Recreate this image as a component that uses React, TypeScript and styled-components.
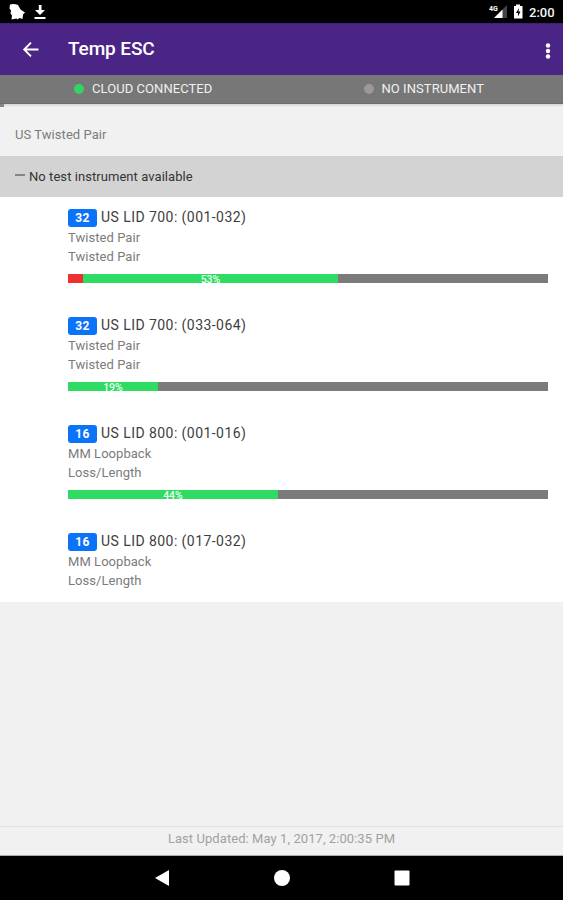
import React from 'react';
import styled, { createGlobalStyle } from 'styled-components';

const GlobalStyle = createGlobalStyle`
  *, *::before, *::after { box-sizing: border-box; }
  body { margin: 0; background: #f1f1f1; font-family: Roboto, "Liberation Sans", sans-serif; }
`;

const Screen = styled.div`
  display: flex;
  flex-direction: column;
  height: 900px;
  overflow: hidden;
  background: #f1f1f1;
  white-space: nowrap;
`;

const StatusBar = styled.header`
  display: flex;
  flex: none;
  justify-content: space-between;
  height: 23px;
  background: #000;
`;

const StatusGroup = styled.div`
  display: flex;
`;

const Clock = styled.span`
  width: 34px;
  padding-top: 1px;
  color: #f4f4f4;
  font-size: 13px;
  font-weight: 500;
  line-height: 23px;
`;

const Toolbar = styled.div`
  display: flex;
  flex: none;
  align-items: center;
  height: 52px;
  padding: 0 8px 0 20px;
  background: #4b2585;
  border-top: 1px solid #40206f;
`;

const Title = styled.h1`
  flex: 1;
  margin: 0 0 1px 27px;
  color: #fff;
  font-size: 19px;
  font-weight: 500;
  letter-spacing: -0.1px;
  line-height: 24px;
`;

const ConnectionBar = styled.div`
  display: grid;
  flex: none;
  grid-template-columns: 1fr 1fr;
  height: 29px;
  background: #777;
  border-bottom: 1px solid #6d6d6d;
`;

const Connection = styled.div<{ $inset: number }>`
  display: flex;
  align-items: center;
  gap: 8px;
  height: 27px;
  padding-left: ${p => p.$inset}px;
  color: #f0f0f0;
  font-size: 13px;
  letter-spacing: 0.06px;
`;

const Dot = styled.i<{ $color: string }>`
  width: 10px;
  height: 10px;
  border-radius: 50%;
  background: ${p => p.$color};
`;

const LoadTrack = styled.div`
  flex: none;
  height: 3px;
  background: linear-gradient(#d2d2d2, #f1f1f1);
  &::before { content: ""; display: block; width: 4px; height: 3px; background: #858585; }
`;

const SectionLabel = styled.div`
  flex: none;
  height: 49px;
  padding: 16px 15px 0;
  color: #7c7c7c;
  font-size: 13px;
  letter-spacing: 0.06px;
  line-height: 24px;
`;

const Notice = styled.div`
  display: flex;
  flex: none;
  align-items: center;
  gap: 4px;
  height: 41px;
  padding: 0 15px 1px;
  background: #d3d3d3;
  color: #343434;
  font-size: 13px;
  letter-spacing: 0.06px;
`;

const Dash = styled.i`
  width: 10px;
  height: 2px;
  margin-top: -3px;
  background: #858585;
`;

const List = styled.main`
  flex: none;
  height: 405px;
  background: #fff;
`;

const Item = styled.section`
  height: 107.9px;
  padding: 9px 15px 0 68px;
`;

const ItemHeading = styled.div`
  display: flex;
  align-items: center;
  gap: 4px;
  height: 22px;
  color: #3e3e3e;
  font-size: 14px;
  letter-spacing: 0.44px;
`;

const Badge = styled.span`
  width: 29px;
  height: 18px;
  margin-top: 2px;
  border-radius: 3px;
  background: #0b73f8;
  color: #fff;
  font-size: 12px;
  font-weight: 700;
  letter-spacing: 0.4px;
  line-height: 18px;
  text-align: center;
`;

const Detail = styled.div`
  height: 19px;
  color: #7b7b7b;
  font-size: 13px;
  letter-spacing: 0.05px;
  line-height: 20px;
`;

const Progress = styled.div`
  display: flex;
  height: 9px;
  margin-top: 8px;
  background: #7b7b7b;
`;

const Segment = styled.div<{ $color: string }>`
  height: 9px;
  background: ${p => p.$color};
  color: #f0fff5;
  font-size: 10.5px;
  font-weight: 500;
  line-height: 11px;
  text-align: center;
`;

const Footer = styled.footer`
  flex: none;
  height: 30px;
  margin-top: auto;
  border-top: 1px solid #e2e2e2;
  border-bottom: 1px solid #aaa;
  color: #a1a1a1;
  font-size: 13px;
  letter-spacing: 0.07px;
  line-height: 24px;
  text-align: center;
`;

const NavBar = styled.nav`
  display: flex;
  flex: none;
  align-items: center;
  justify-content: center;
  gap: 104px;
  height: 44px;
  background: #000;
`;

interface Entry {
  count: number;
  name: string;
  kind: string;
  test: string;
  failed?: number;
  passed?: number;
  label?: string;
}

const entries: Entry[] = [
  { count: 32, name: 'US LID 700: (001-032)', kind: 'Twisted Pair', test: 'Twisted Pair', failed: 15, passed: 255, label: '53%' },
  { count: 32, name: 'US LID 700: (033-064)', kind: 'Twisted Pair', test: 'Twisted Pair', passed: 90, label: '19%' },
  { count: 16, name: 'US LID 800: (001-016)', kind: 'MM Loopback', test: 'Loss/Length', passed: 210, label: '44%' },
  { count: 16, name: 'US LID 800: (017-032)', kind: 'MM Loopback', test: 'Loss/Length' },
];

const StatusIcons = () => (
  <svg width="60" height="23" fill="#fff">
    <path d="M10 4.500q4-1 8 .5l2.500 4.500L25 12.500l-2 2-.5 4.500-3-1-2 1.500-1-1-5 1 .5-4-1.500-2 .5-3-1.500-2z" />
    <path d="M38.800 5h2.700v5H45l-5 5-5-5h3.800zM34.500 17h11v2h-11z" />
  </svg>
);

const SignalIcons = () => (
  <svg width="40" height="23" fill="#fff">
    <path d="M18 5v13H5z" fill="#444" />
    <path d="M13.500 9.500V18H5z" />
    <text x="0" y="11" fontSize="7" fontWeight="700">4G</text>
    <path d="M25 6h2V4.500h4V6h2.500v12.500H25z" />
    <path d="M30 8l-3 5h2v3.500l2.500-5h-2z" fill="#000" />
  </svg>
);

export default function App() {
  return (
    <Screen>
      <GlobalStyle />
      <StatusBar>
        <StatusIcons />
        <StatusGroup>
          <SignalIcons />
          <Clock>2:00</Clock>
        </StatusGroup>
      </StatusBar>
      <Toolbar>
        <svg width="21" height="20" fill="none" stroke="#fff" strokeWidth="1.9">
          <path d="M18.500 9.500H4.500M11 2.700 4.200 9.500l6.800 6.800" />
        </svg>
        <Title>Temp ESC</Title>
        <svg width="14" height="22" fill="#fff">
          <circle cx="7" cy="6.500" r="2.200" /><circle cx="7" cy="12" r="2.200" /><circle cx="7" cy="17.500" r="2.200" />
        </svg>
      </Toolbar>
      <ConnectionBar>
        <Connection $inset={74}><Dot $color="#34d464" />CLOUD CONNECTED</Connection>
        <Connection $inset={82}><Dot $color="#999" />NO INSTRUMENT</Connection>
      </ConnectionBar>
      <LoadTrack />
      <SectionLabel>US Twisted Pair</SectionLabel>
      <Notice><Dash />No test instrument available</Notice>
      <List>
        {entries.map(e => (
          <Item key={e.name}>
            <ItemHeading><Badge>{e.count}</Badge>{e.name}</ItemHeading>
            <Detail>{e.kind}</Detail>
            <Detail>{e.test}</Detail>
            {e.passed && (
              <Progress>
                {e.failed && <Segment $color="#ee3030" style={{ width: e.failed }} />}
                <Segment $color="#2fdc63" style={{ width: e.passed }}>{e.label}</Segment>
              </Progress>
            )}
          </Item>
        ))}
      </List>
      <Footer>Last Updated: May 1, 2017, 2:00:35 PM</Footer>
      <NavBar>
        <svg width="16" height="18" fill="#fff"><path d="M15 1v16L1 9z" /></svg>
        <svg width="16" height="18" fill="#fff"><circle cx="8" cy="9" r="8" /></svg>
        <svg width="16" height="18" fill="#fff"><rect x=".5" y="1.500" width="15" height="15" rx="1" /></svg>
      </NavBar>
    </Screen>
  );
}
